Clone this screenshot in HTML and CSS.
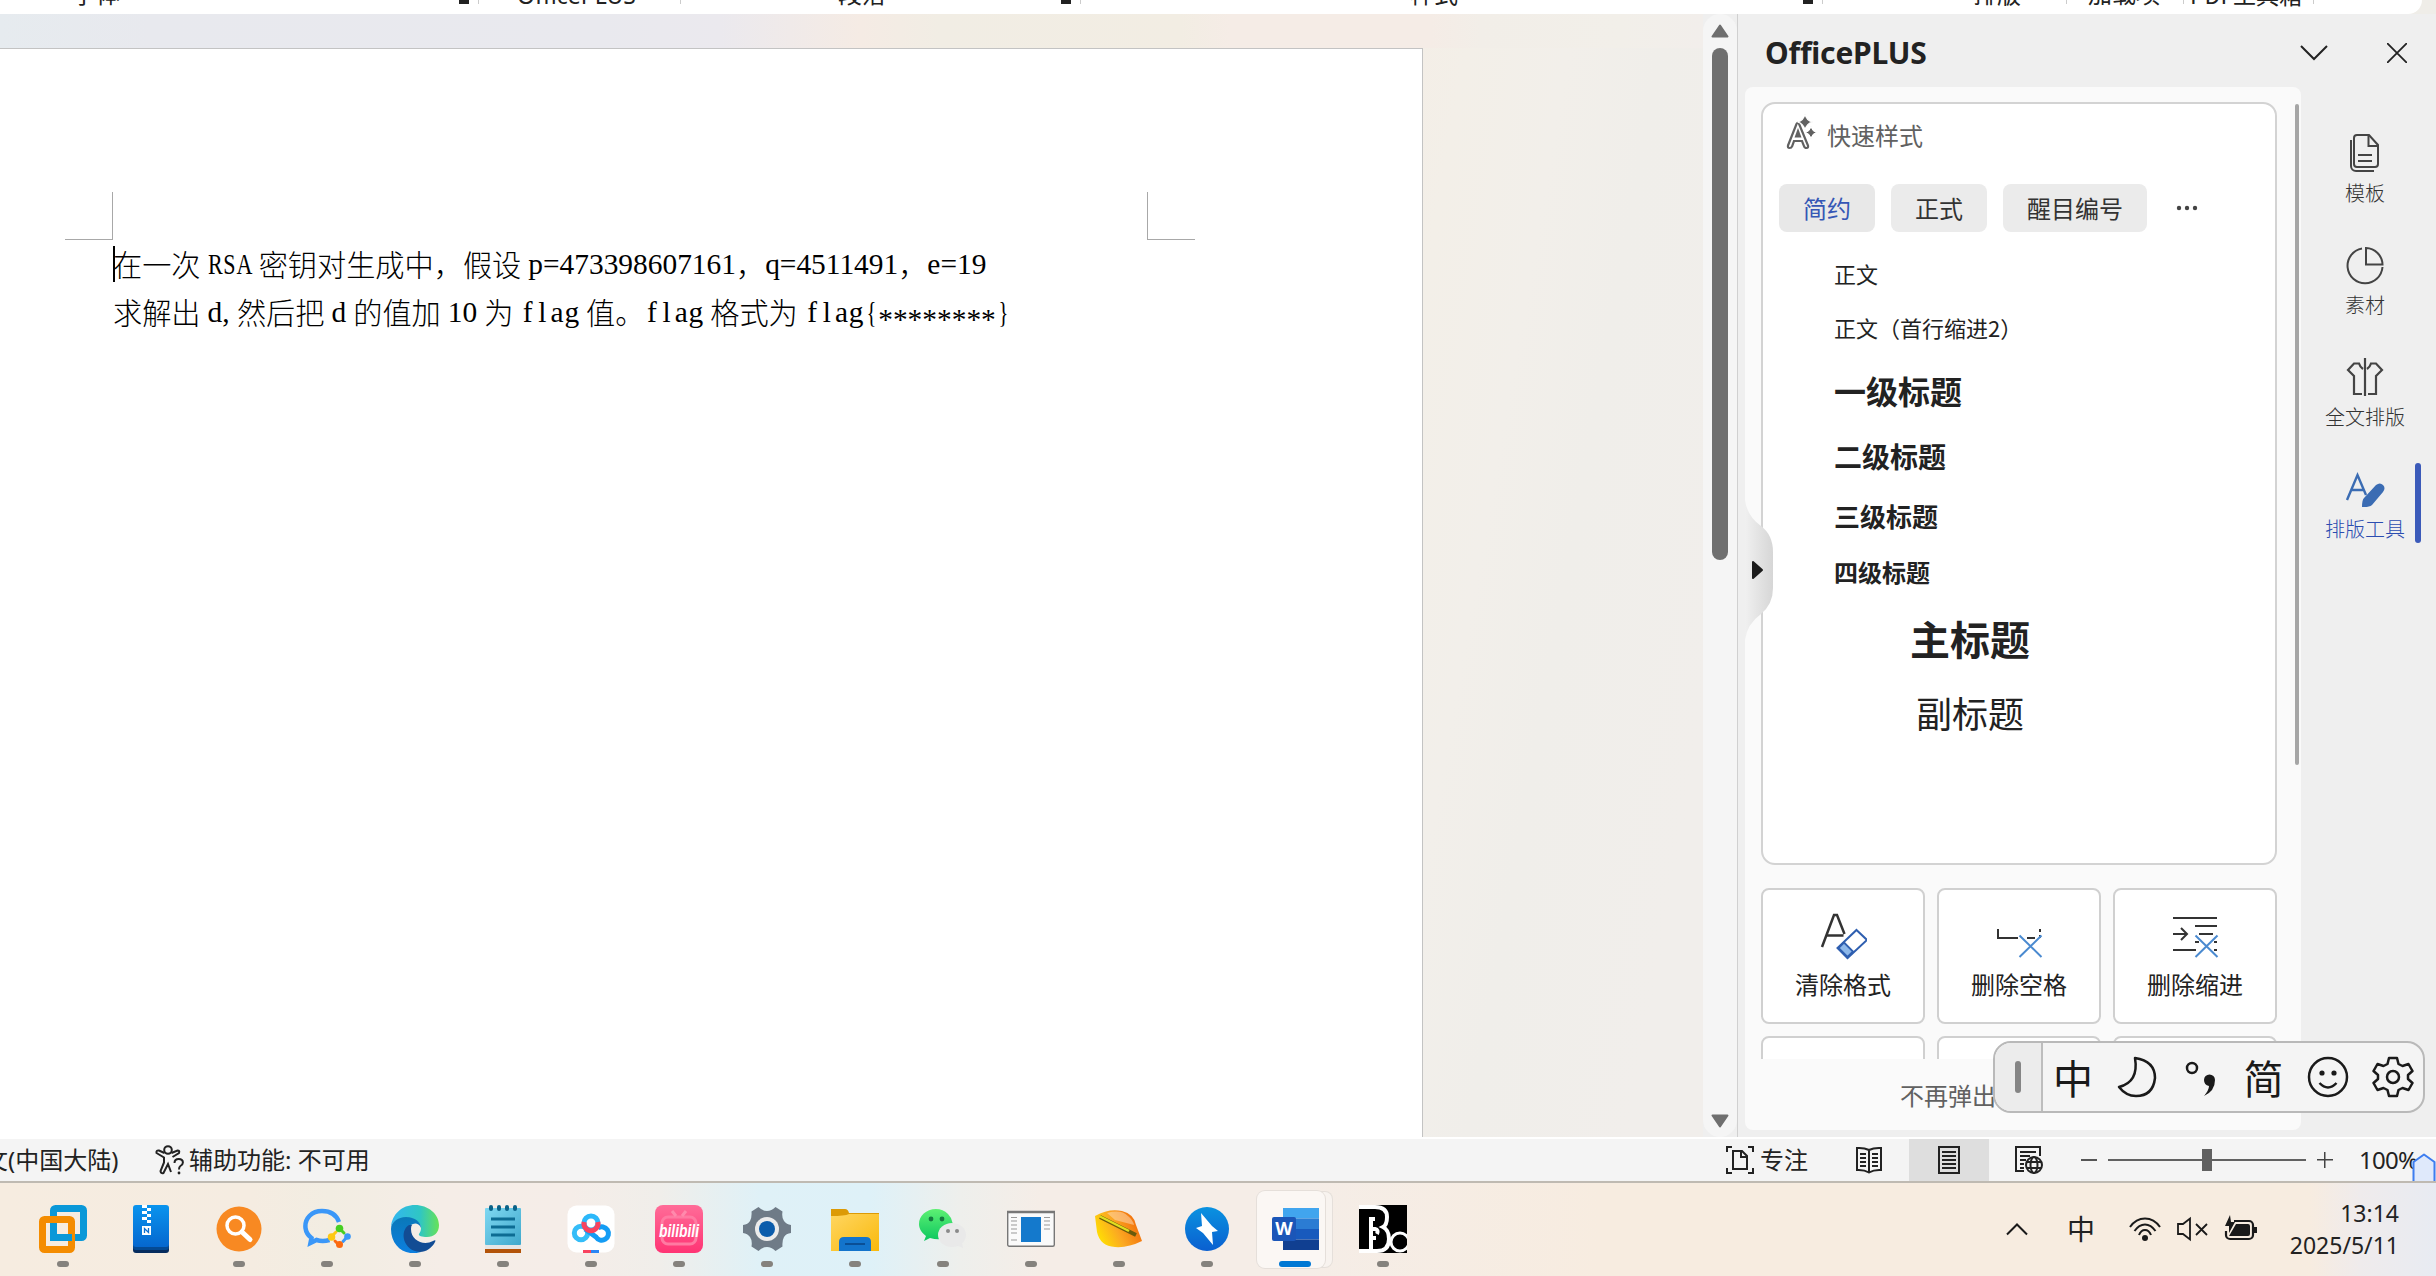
FILE: index.html
```html
<!DOCTYPE html>
<html lang="zh-CN">
<head>
<meta charset="utf-8">
<title>Word</title>
<link rel="stylesheet" href="styles.css">
</head>
<body>
<div class="screen">
<header class="ribbon">
  <div class="ribbon-inner">
    <span class="grp g-font">字体</span><i class="launch l1"></i>
    <span class="grp g-plus">OfficePLUS</span><i class="sep s2"></i>
    <span class="grp g-para">段落</span><i class="launch l2"></i>
    <span class="grp g-style">样式</span><i class="launch l3"></i>
    <span class="grp g-lay">排版</span><i class="sep s4"></i>
    <span class="grp g-add">加载项</span><i class="sep s5"></i>
    <span class="grp g-pdf">PDF工具箱</span><i class="sep s6"></i>
  </div>
</header>

<main class="main">
  <section class="canvas">
    <article class="page">
      <div class="crops"><i class="crop crop-l"></i><i class="crop crop-r"></i></div>
      <p class="line caret">在一次<span class="lat rsa gap"><b>R</b><b>S</b><b>A</b></span>密钥对生成中，假设<span class="lat gap-l">p=473398607161</span>，<span class="lat">q=4511491</span>，<span class="lat">e=19</span></p>
      <p class="line">求解出<span class="lat flag gap-l"><b>d</b><b class="comma">,</b></span>然后把<span class="lat gap">d</span>的值加<span class="lat gap">10</span>为<span class="lat flag gap"><b>f</b><b>l</b><b>a</b><b>g</b></span>值。<span class="lat flag gap-r"><b>f</b><b>l</b><b>a</b><b>g</b></span>格式为<span class="lat flag gap-l"><b>f</b><b>l</b><b>a</b><b>g</b></span><span class="lat flag brace"><b>{</b></span><span class="lat stars">********</span><span class="lat flag brace"><b>}</b></span></p>
    </article>
  </section>

  <div class="vscroll">
    <svg width="18" height="14" viewBox="0 0 18 14"><path d="M9 1.500 16.500 12.500H1.500z" fill="#6f6f6f" stroke="#6f6f6f" stroke-width="2" stroke-linejoin="round"/></svg>
    <i class="thumb"></i>
    <svg class="down" width="18" height="14" viewBox="0 0 18 14"><path d="M9 12.500 16.500 1.500H1.500z" fill="#6f6f6f" stroke="#6f6f6f" stroke-width="2" stroke-linejoin="round"/></svg>
  </div>

  <aside class="pane">
    <div class="pane-head">
      <h1>OfficePLUS</h1>
      <svg class="i-down" width="28" height="16" viewBox="0 0 28 16"><path d="M1 1 14 14 27 1" fill="none" stroke="#222" stroke-width="2"/></svg>
      <svg width="20" height="20" viewBox="0 0 20 20"><path d="M0 0 20 20M20 0 0 20" stroke="#222" stroke-width="1.800"/></svg>
    </div>
    <div class="pane-body">
      <div class="sheet">
        <div class="sheet-scroll">
          <div class="card">
            <div class="card-title">
              <svg width="32" height="36" viewBox="0 0 32 36"><path d="M3 31.500 11.500 10q1.300-2.500 2.600 0L23 31.500q.5 2.500-1.500 2.500t-2.500-2l-2-5H9l-2 5.500Q6.500 34 4.500 34T3 31.500z" fill="#fff" stroke="#616161" stroke-width="2.200"/><path d="M9.500 23.500h7L13 14z" fill="#616161"/><path d="M20 0q1.500 6.500 7.500 8-6 1.500-7.500 8-1.500-6.500-7.500-8 6-1.500 7.500-8z" fill="#616161" stroke="#fff" stroke-width="1.200"/><path d="M26 12.500q1.200 5 5.500 6-4.300 1-5.500 6-1.200-5-5.500-6 4.300-1 5.500-6z" fill="#616161" stroke="#fff"/></svg>
              <span>快速样式</span>
            </div>
            <div class="pills"><span class="pill on">简约</span><span class="pill">正式</span><span class="pill">醒目编号</span><svg width="22" height="6" viewBox="0 0 22 6"><g fill="#444"><circle cx="3" cy="3" r="2.200"/><circle cx="11" cy="3" r="2.200"/><circle cx="19" cy="3" r="2.200"/></g></svg></div>
            <ul class="styles">
              <li class="st-body">正文</li>
              <li class="st-body2">正文（首行缩进2）</li>
              <li class="st-1">一级标题</li>
              <li class="st-2">二级标题</li>
              <li class="st-3">三级标题</li>
              <li class="st-4">四级标题</li>
              <li class="st-main">主标题</li>
              <li class="st-sub">副标题</li>
            </ul>
          </div>
          <div class="tools">
            <div class="tool">
              <svg width="48" height="50" viewBox="0 0 48 50"><path d="M3 36 15 4h3l7.500 19M7.500 24.500h17" fill="none" stroke="#333" stroke-width="2.500"/><path d="M37.500 19 48 29 28.500 47 18.500 37z" fill="#fff" stroke="#2f5fb0" stroke-width="2"/><path d="M25 31.500 34 40.500 28.500 46 19.500 37z" fill="#8db8ea" stroke="#2f5fb0" stroke-width="1.800"/></svg>
              <span>清除格式</span>
            </div>
            <div class="tool">
              <svg width="48" height="50" viewBox="0 0 48 50"><path d="M3 18v9h20M32 27h8M45 18v3M45 24v3" fill="none" stroke="#333" stroke-width="2"/><path d="M24.500 24.500 46.500 46M46.500 24.500 24.500 46" stroke="#4a8ad0" stroke-width="2"/></svg>
              <span>删除空格</span>
            </div>
            <div class="tool">
              <svg width="48" height="50" viewBox="0 0 48 50"><path d="M2 7h44M24 15h22M28 23h14M24 31h4M43 31h3M2 39h23M43 39h3M2 23h14M10 17l6 6-6 6" fill="none" stroke="#333" stroke-width="2"/><path d="M24.500 24.500 46.500 46M46.500 24.500 24.500 46" stroke="#4a8ad0" stroke-width="2"/></svg>
              <span>删除缩进</span>
            </div>
            <div class="tool"></div><div class="tool"></div><div class="tool"></div>
          </div>
        </div>
        <div class="sheet-foot">不再弹出</div>
        <i class="mini-thumb"></i>
        <svg class="pull" width="29" height="140" viewBox="0 0 29 140"><defs><linearGradient id="pg"><stop offset="0" stop-color="#f0f0f0"/><stop offset="1" stop-color="#d6d6d6"/></linearGradient></defs><path d="M0 0Q2 16 16 26 28 35 28 52V88Q28 104 16 114 2 124 0 140z" fill="url(#pg)"/><path d="M8 62 17 70 8 78z" fill="#1c1c1c" stroke="#1c1c1c" stroke-width="2" stroke-linejoin="round"/></svg>
      </div>
      <nav class="tabs">
        <div class="tab"><svg width="40" height="44" viewBox="0 0 40 44"><g fill="none" stroke="#444" stroke-width="2"><path d="M12 4h12l9 10v19a3 3 0 0 1-3 3H12a3 3 0 0 1-3-3V7a3 3 0 0 1 3-3z"/><path d="M23.500 4v11H33M13 24h14M13 30h14"/><path d="M6 9v26a5 5 0 0 0 5 5h18"/></g></svg><span>模板</span></div>
        <div class="tab"><svg width="40" height="44" viewBox="0 0 40 44"><g fill="none" stroke="#444" stroke-width="2"><path d="M17 5.500A17.500 17.500 0 1 0 37.500 24"/><path d="M21 5a17 17 0 0 1 16.500 16.500H21z"/></g></svg><span>素材</span></div>
        <div class="tab"><svg width="40" height="44" viewBox="0 0 40 44"><path d="M20 3v38M18 14Q15 12 14 8.500H9L3 15l6 6v18h8M22 14q3-2 4-5.500h5l6 6.500-6 6v18h-8" fill="none" stroke="#444" stroke-width="2.200"/></svg><span>全文排版</span></div>
        <div class="tab on"><svg width="40" height="44" viewBox="0 0 40 44"><path d="M2 33 12.500 8 21 28M6 23h13" fill="none" stroke="#3b6cb3" stroke-width="2.400"/><path d="M17 40q0-7 2-9L31 18q4-3 7 0t0 7L27 38q-3 2.500-10 2z" fill="#3b6cb3"/></svg><span>排版工具</span></div>
      </nav>
    </div>
  </aside>
</main>

<footer class="status">
  <span class="lang">文(中国大陆)</span>
  <svg class="acc" width="30" height="30" viewBox="0 0 30 30"><g fill="none" stroke="#222" stroke-width="2"><circle cx="13" cy="5" r="3.800"/><path d="M9.500 8 4 5.500Q1 5 1.500 8L9 12.500v5L5.500 26q.5 3 3 2L13 19l3 8M16.500 8l6-2.500Q25 5.500 24 8l-6.500 4"/><path d="M19.500 18q0-4 4.200-4t4.200 3.500q0 2-2.500 3.500-1.400 1-1.400 3.500"/></g><circle cx="24" cy="28" r="1.400" fill="#222"/></svg>
  <span class="acc-text">辅助功能: 不可用</span>
  <span class="grow"></span>
  <svg class="foc" width="28" height="28" viewBox="0 0 28 28"><g fill="none" stroke="#222" stroke-width="2"><path d="M1 6V1h5M22 1h5v5M27 22v5h-5M6 27H1v-5"/><path d="M7 5h9l5 5v13H7zM15 5v6h6"/></g></svg>
  <span class="focus">专注</span>
  <span class="view"><svg width="28" height="28" viewBox="0 0 28 28"><g fill="none" stroke="#222" stroke-width="2"><path d="M14 4Q9 1.500 2 2v22q7-.5 12 2.500Q19 23.500 26 24V2q-7-.5-12 2zM14 4v22"/><path d="M5 8h6M5 12h6M5 16h6M5 20h6M17 8h6M17 12h6M17 16h6M17 20h6"/></g></svg></span>
  <span class="view on"><svg width="28" height="28" viewBox="0 0 28 28"><g fill="none" stroke="#222" stroke-width="2"><path d="M4 1h20v26H4z"/><path d="M7 6h14M7 10h14M7 14h14M7 18h14M7 22h14"/></g></svg></span>
  <span class="view"><svg width="28" height="28" viewBox="0 0 28 28"><g fill="none" stroke="#222" stroke-width="2"><path d="M9 25H1V1h24v9M5 6h16M5 10h10M5 14h6M5 18h4M5 22h4"/><circle cx="19" cy="19" r="8"/><ellipse cx="19" cy="19" rx="3.500" ry="8"/><path d="M12 16h14M12 22h14"/></g></svg></span>
  <span class="zoom"><i class="minus"></i><i class="track"><i class="knob"></i></i><i class="plus"></i><span>100%</span></span>
  <svg class="corner" width="24" height="28" viewBox="0 0 24 28"><path d="M1.500 30V9L12 1.500 22.500 9V30z" fill="#dfe9fb" stroke="#3d7df0" stroke-width="2" stroke-linejoin="round"/></svg>
</footer>

<div class="taskbar">
  <div class="apps">
    <div class="app"><svg viewBox="0 0 48 48"><rect x="14.500" y="3.500" width="30" height="29" rx="2" fill="none" stroke="#0a98d8" stroke-width="7"/><rect x="3.500" y="14.500" width="29" height="30" rx="2" fill="none" stroke="#f48c00" stroke-width="7"/><path d="M14.500 18v14.500H33" fill="none" stroke="#0a98d8" stroke-width="7"/></svg></div>
    <div class="app idle"><svg viewBox="0 0 48 48"><defs><linearGradient id="zg" x2="0" y2="1"><stop stop-color="#0a94ee"/><stop offset="1" stop-color="#0567cf"/></linearGradient></defs><rect x="6" y="30" width="36" height="18" rx="3" fill="#062c5e"/><rect x="6" y="30" width="36" height="15" rx="3" fill="#044a94"/><rect x="6" y="0" width="36" height="42" rx="3" fill="url(#zg)"/><path d="M15 0h5v3h-5zM20 3h4v3h-4zM15 6h5v3h-5zM20 9h4v3h-4zM15 12h5v3h-5zM20 15h4v3h-4zM15 21h9v9h-9z" fill="#fff"/><path d="M17.500 28v-4.500l4 4V23" fill="none" stroke="#0b6fd0" stroke-width="1.300"/></svg></div>
    <div class="app"><svg viewBox="0 0 48 48"><circle cx="24" cy="24" r="22.500" fill="#f88922"/><circle cx="20.500" cy="20.500" r="8.500" fill="none" stroke="#fff" stroke-width="3.500"/><path d="M27 27 35 34.500" stroke="#fff" stroke-width="5" stroke-linecap="round"/></svg></div>
    <div class="app"><svg viewBox="0 0 48 48"><path d="M36 17C33 9 26 6 19 6 9 6 1.500 13 2.500 23q.7 6 6 10l-1 5 6-3q6 2 13 0" fill="none" stroke="#3a97f8" stroke-width="4.500"/><path d="m36.500 24 8.500 8-8.500 8-8.500-8z" fill="#f5ede4"/><g stroke-width="3" stroke-linecap="round"><path d="M37 24 41 28" stroke="#46cf22"/><path d="M44 32l-4 4.500" stroke="#3a97f8"/><path d="M36 40l-4-4" stroke="#fb6a10"/><path d="M29 31l4-4" stroke="#fdc813"/></g><circle cx="36.500" cy="23.500" r="3.800" fill="#46cf22"/><circle cx="44.500" cy="31.500" r="3.300" fill="#3a97f8"/><circle cx="36.500" cy="39.500" r="3.500" fill="#fb6a10"/><circle cx="28.500" cy="32" r="3.800" fill="#fdc813"/></svg></div>
    <div class="app"><svg viewBox="0 0 48 48"><defs><linearGradient id="e1"><stop stop-color="#33b5f0"/><stop offset=".6" stop-color="#2fc6c4"/><stop offset="1" stop-color="#67e257"/></linearGradient><linearGradient id="e2" x2="0" y2="1"><stop stop-color="#0a78b8"/><stop offset="1" stop-color="#0c7fe0"/></linearGradient></defs><path d="M0 22C1 9 11 0 24 0s24 9 24 20c0 8-5 12-12 12-5 0-9-1-8-3s2-3 2-6c0-5-5-9-12-10C9 12 2 16 0 22z" fill="url(#e1)"/><path d="M0 24c0-7 7-12 15-12 9 0 15 5 15 11-2-5-6-5-8-4-8 3-7 20 8 28C14 52 0 41 0 24z" fill="url(#e2)"/><path d="M18 20c-10 6-6 26 11 27 6 0 12-4 15-10 1-2 0-2-2-1-9 5-22 0-22-12q0-3 1-4z" fill="#124c94"/></svg></div>
    <div class="app"><svg viewBox="0 0 48 48"><defs><linearGradient id="ng" x2="1" y2="1"><stop stop-color="#7fd8f2"/><stop offset="1" stop-color="#3fa8cc"/></linearGradient></defs><rect x="6" y="38" width="36" height="10" fill="#b35309"/><rect x="6" y="36" width="36" height="8" fill="#e6e6e6"/><rect x="6" y="3" width="36" height="37" rx="1" fill="url(#ng)"/><path d="M12 14h24M12 22h24M12 30h24" stroke="#0d6c93" stroke-width="3"/><path d="M12 2v2M20 2v2M28 2v2M36 2v2" stroke="#0a6288" stroke-width="4" stroke-linecap="round"/></svg></div>
    <div class="app"><svg viewBox="0 0 48 48"><rect x=".5" y=".5" width="47" height="47" rx="9" fill="#fff"/><g fill="none" stroke-width="5"><circle cx="14" cy="28" r="6.700" stroke="#35bdf8"/><path d="M31 23a6.700 6.700 0 1 1-2 9L18 24" stroke="#149cf4"/><circle cx="24" cy="18" r="7" fill="#fff" stroke="#2cb8fa"/><path d="M17.200 17a7 7 0 1 0 13.600 0" stroke="#f8435f"/></g><path d="M16 45h8v3h-8z" fill="#f8435f"/><path d="M24 45h8v3h-8z" fill="#2a86f5"/></svg></div>
    <div class="app"><svg viewBox="0 0 48 48"><defs><linearGradient id="bg" x2="0" y2="1"><stop stop-color="#ff6c98"/><stop offset="1" stop-color="#ff3474"/></linearGradient></defs><rect width="48" height="48" rx="8" fill="url(#bg)"/><rect x="7" y="12" width="34" height="27" rx="6" fill="none" stroke="#ff7aa2" stroke-width="3"/><path d="m17 6 4 5M31 6l-4 5" stroke="#ff8aac" stroke-width="3"/><text x="24" y="32" text-anchor="middle" class="bili" textLength="40" lengthAdjust="spacingAndGlyphs">bilibili</text></svg></div>
    <div class="app"><svg viewBox="0 0 48 48"><path d="M15.500 2q4 4 8.500 4t8.500-4l7 4.500q-1 6 1.500 9.500t7 4v8q-5 .5-7 4t-1.500 9.500l-7 4.500q-4-4-8.500-4t-8.500 4l-7-4.500q1-6-1.500-9.500T0 28v-8q5-.5 7-4T8.500 6.500z" fill="#6f7b87"/><circle cx="24" cy="24" r="12" fill="#ececec"/><circle cx="24" cy="24" r="8" fill="#0c5cab"/></svg></div>
    <div class="app"><svg viewBox="0 0 48 48"><defs><linearGradient id="fg" x2="1" y2="1"><stop stop-color="#ffd661"/><stop offset="1" stop-color="#f9b90c"/></linearGradient></defs><path d="M0 4h14q3 0 4 4h30v6H0z" fill="#dc9a06"/><path d="M0 11q14 0 18-2h30v37H0z" fill="url(#fg)"/><path d="M8 46V37q0-5 5-5h22q5 0 5 5v9z" fill="#1374cc"/><path d="M14 39h20" stroke="#0a4f96" stroke-width="2"/></svg></div>
    <div class="app"><svg viewBox="0 0 48 48"><defs><linearGradient id="wg" x2="0" y2="1"><stop stop-color="#5df073"/><stop offset="1" stop-color="#0cc75f"/></linearGradient></defs><path d="M17 4C7 4 0 11 0 19c0 5 3 9 7 12l-2 5 6-3q15 4 20-5 6-11-2-19-5-5-12-5z" fill="url(#wg)"/><ellipse cx="33" cy="30" rx="14" ry="12" fill="#e9e9e9"/><path d="m37 40 7 3-1-6z" fill="#e9e9e9"/><g fill="#157a3f"><circle cx="12" cy="14" r="2.400"/><circle cx="23" cy="14" r="2.400"/></g><g fill="#8a8a8a"><circle cx="29" cy="26" r="2"/><circle cx="38" cy="26" r="2"/></g></svg></div>
    <div class="app"><svg viewBox="0 0 48 48"><rect x=".7" y="6.700" width="46.600" height="34.600" rx="1.500" fill="#fafafa" stroke="#777" stroke-width="1.400"/><path d="M0 7h48" stroke="#777" stroke-width="2.500"/><rect x="14" y="12" width="20" height="25" fill="#1479cc"/><path d="M4 12.500h6M4 16h6M4 20h6M4 24h6M4 28h6M4 35h6M37 12.500h6M37 16h6M37 20h6M37 24h6" stroke="#999"/></svg></div>
    <div class="app"><svg viewBox="0 0 48 48"><defs><linearGradient id="sg" x1="0" y1=".7" x2="1" y2=".3"><stop stop-color="#ffe400"/><stop offset=".45" stop-color="#fba922"/><stop offset="1" stop-color="#f06508"/></linearGradient></defs><path d="M0 11Q14 3 27 6q12 3 14 14l6 16q-14 7-27 6Q5 41 2 27z" fill="url(#sg)"/><path d="M12 8Q26 4 33 11q5 4 6 9L20 15z" fill="#ffe0bc" opacity=".5"/><path d="m5 12 36 18" stroke="#6a5a0a" stroke-width="4"/><path d="m5 11.500 29 14.500" stroke="#dfdf20" stroke-width="2.500"/></svg></div>
    <div class="app"><svg viewBox="0 0 48 48"><defs><linearGradient id="tg" x2="0" y2="1"><stop stop-color="#0a92e0"/><stop offset="1" stop-color="#0a5fd0"/></linearGradient></defs><circle cx="24" cy="24" r="22" fill="url(#tg)"/><path d="m18 8 11 13 6 5-6 1 1 13L20 28l-7-5 6-2z" fill="#fff"/></svg></div>
    <div class="app active"><svg viewBox="0 0 48 48"><path d="M12 3h36v10.500H12z" fill="#41a5ee"/><path d="M12 13.500h36V24H12z" fill="#2b7cd3"/><path d="M12 24h36v10.500H12z" fill="#185abd"/><path d="M12 34.500h36V45H12z" fill="#103f91"/><rect x="1" y="12" width="24" height="24" rx="2" fill="#1b56b8"/><text x="13" y="30" text-anchor="middle" class="wl">W</text></svg></div>
    <div class="app"><svg viewBox="0 0 48 48"><path d="M0 0h48v48H0z" fill="#000"/><path d="M0 2h16q12 0 12 10 0 8-4 10 6 3 6 12 0 12-12 12H0M12 44V14h4M13 24h3q4 1 2 5M13 33h4" fill="none" stroke="#fff" stroke-width="4"/><circle cx="41" cy="37" r="9" fill="#000" stroke="#fff" stroke-width="3"/></svg></div>
  </div>
  <div class="tray">
    <svg class="t1" width="22" height="14" viewBox="0 0 22 14"><path d="M1 12.500 11 2.500l10 10" fill="none" stroke="#1a1a1a" stroke-width="2"/></svg>
    <span class="t2">中</span>
    <svg class="t3" width="32" height="28" viewBox="0 0 32 28"><g fill="none" stroke="#1a1a1a" stroke-width="2"><path d="M1 12Q7 3.500 16 3.500T31 12M5.500 16Q10 9.500 16 9.500T26.500 16M10 20q2-5 6-5t6 5"/></g><circle cx="16" cy="23" r="3" fill="#1a1a1a"/></svg>
    <svg class="t4" width="32" height="28" viewBox="0 0 32 28"><path d="M1 9h5l7-5.500v21L6 19H1zM19 9l11 11M30 9 19 20" fill="none" stroke="#1a1a1a" stroke-width="1.800"/></svg>
    <svg class="t5" width="34" height="28" viewBox="0 0 34 28"><path d="M10 6h15a4 4 0 0 1 4 4v10a4 4 0 0 1-4 4H6a4 4 0 0 1-4-4v-4" fill="none" stroke="#1a1a1a" stroke-width="2.200"/><path d="M12 9h12a2 2 0 0 1 2 2v8a2 2 0 0 1-2 2H5zM29 12h4v6h-4zM6 0 1 11h4v7l6-11H7z" fill="#1a1a1a"/></svg>
    <div class="clock"><span>13:14</span><span>2025/5/11</span></div>
  </div>
</div>

<div class="ime">
  <span class="grip"></span>
  <div class="keys">
    <span>中</span>
    <svg width="40" height="42" viewBox="0 0 40 42"><path d="M18 2q20 3 20 20-2 18-19 18-10 0-17-9Q22 26 18 2z" fill="none" stroke="#1a1a1a" stroke-width="2.500" stroke-linejoin="round"/></svg>
    <svg width="40" height="42" viewBox="0 0 40 42"><circle cx="12" cy="12" r="5" fill="none" stroke="#1a1a1a" stroke-width="2.500"/><path d="M24 24a5.500 5.500 0 0 1 11 0q0 11-11 16 5-6 5-10-5-1-5-6z" fill="#1a1a1a"/></svg>
    <span>简</span>
    <svg width="42" height="42" viewBox="0 0 42 42"><circle cx="21" cy="21" r="19" fill="none" stroke="#1a1a1a" stroke-width="2.500"/><circle cx="15" cy="17" r="2.600" fill="#1a1a1a"/><circle cx="27" cy="17" r="2.600" fill="#1a1a1a"/><path d="M12.500 27q8.500 9 17 0" fill="none" stroke="#1a1a1a" stroke-width="2.500"/></svg>
    <svg width="42" height="42" viewBox="0 0 42 42"><path d="M17 2h8l1.500 6 4 2 6-2 4 7-4.500 4v4l4.500 4-4 7-6-2-4 2L25 40h-8l-1.500-6-4-2-6 2-4-7L6 23v-4l-4.500-4 4-7 6 2 4-2z" fill="none" stroke="#1a1a1a" stroke-width="2.500" stroke-linejoin="round"/><circle cx="21" cy="21" r="6" fill="none" stroke="#1a1a1a" stroke-width="2.500"/></svg>
  </div>
</div>
</div>
</body>
</html>
```
FILE: styles.css
```css
* { box-sizing: border-box; }
body {
  margin: 0;
  font-family: "Noto Sans", "Noto Sans CJK SC", sans-serif;
  color: #222;
}
svg { display: block; flex: none; }
i { display: block; font-style: normal; }
.screen {
  position: relative;
  width: 2436px;
  height: 1276px;
  overflow: hidden;
  display: flex;
  flex-direction: column;
  background: #efefef;
}

/* ribbon group captions, cut off by the top edge */
.ribbon { height: 14px; flex: none; background: #efede8; overflow: hidden; }
.ribbon-inner {
  position: relative;
  width: 2422px;
  height: 14px;
  background: #fff;
  border-bottom-right-radius: 14px;
}
.grp { position: absolute; top: -21px; font: 24px/28px "Noto Sans CJK SC", sans-serif; white-space: nowrap; }
.g-font { left: 72px; }
.g-plus { left: 517px; font-family: "Noto Sans", sans-serif; font-size: 23px; top: -19px; }
.g-para { left: 838px; }
.g-style { left: 1410px; }
.g-lay { left: 1973px; }
.g-add { left: 2088px; }
.g-pdf { left: 2190px; font-size: 23px; top: -20px; }
.launch { position: absolute; top: 0; width: 20px; height: 4px; border-left: 10px solid #222; border-right: 1px solid #ccc; }
.l1 { left: 459px; } .l2 { left: 1061px; } .l3 { left: 1803px; }
.sep { position: absolute; top: 0; width: 1px; height: 4px; background: #ccc; }
.s2 { left: 680px; } .s4 { left: 2066px; } .s5 { left: 2183px; } .s6 { left: 2313px; }

.main { height: 1123px; flex: none; display: flex; }

/* document */
.canvas {
  width: 1703px;
  padding-top: 34px;
  background:
    linear-gradient(90deg, #e6ebef 0, #e8e9ee 150px, #e9e9ee 600px, #ebe9ee 720px, #f5ebe4 860px, #f1ede4 940px, #f2ede3 1180px, #f5ece6 1230px, #f5ece6 1430px, #f2eee8 1480px, #f2efe9 1620px, #f2eeeb 1703px) top/100% 34px no-repeat,
    linear-gradient(100deg, #f5ece5 0, #f5ede5 1330px, #f3efe8 1450px, #f2efea 1550px, #f0eeea 1640px, #f1eeeb 1800px);
}
.page {
  width: 1423px;
  height: 1089px;
  background: #fff;
  border: solid #c3c3c3;
  border-width: 1px 1px 0 0;
  padding: 143px 0 0 65px;
}
.crops { display: flex; justify-content: space-between; width: 1130px; height: 48px; }
.crop { width: 48px; height: 48px; border: 0 solid #a8a8a8; border-bottom-width: 1px; }
.crop-l { border-right-width: 1px; }
.crop-r { border-left-width: 1px; }
.line {
  position: relative;
  display: flex;
  margin: 0 0 0 48px;
  height: 48px;
  font: 300 29.200px/45px "Noto Sans CJK SC", sans-serif;
  color: #000;
  white-space: nowrap;
}
.line.caret { margin-top: 1px; }
.line.caret::before { content: ""; position: absolute; left: 0; top: 5px; width: 2px; height: 36px; background: #000; }
.lat { font-family: "Liberation Serif", serif; font-size: 29.400px; line-height: 46px; }
.gap { margin: 0 7px; }
.gap-l { margin-left: 7px; }
.gap-r { margin-right: 7px; }
.rsa, .flag { display: inline-flex; }
.lat b { display: block; width: 14.700px; font-weight: 400; text-align: center; }
.lat b.comma { text-align: left; }
.rsa b { transform: scaleX(.75); display: flex; justify-content: center; }
.brace b { transform: scaleX(.7); }
.stars { padding-top: 7px; height: 48px; }

.vscroll {
  width: 34px;
  background: #f5f5f5;
  border-radius: 17px;
  padding: 10px 0 9px;
  display: flex;
  flex-direction: column;
  align-items: center;
}
.thumb { width: 16px; height: 512px; margin-top: 10px; border-radius: 8px; background: #6f6f6f; }
.down { margin-top: auto; }

/* task pane */
.pane { flex: 1; border-left: 1px solid #d0d0d0; display: flex; flex-direction: column; }
.pane-head { height: 73px; padding: 0 29px 0 27px; display: flex; align-items: center; }
.pane-head h1 { margin: 5px auto 0 0; font-size: 30px; font-weight: 700; line-height: 40px; letter-spacing: -.2px; }
.pane-head svg { margin-top: 5px; }
.i-down { margin-right: 59px; }
.pane-body { display: flex; padding-left: 7px; }
.sheet {
  position: relative;
  width: 556px;
  height: 1043px;
  border-radius: 8px;
  background: #fafafa;
  padding: 15px 24px 0 16px;
}
.sheet-scroll { height: 957px; overflow: hidden; }
.card { height: 763px; background: #fff; border: 2px solid #d3d3d3; border-radius: 14px; padding: 10px 15px 0 16px; }
.card-title { display: flex; align-items: center; height: 40px; gap: 10px; padding-left: 6px; font-size: 24px; color: #616161; }
.card-title svg { margin-top: -4px; }
.pills { display: flex; align-items: center; height: 48px; margin-top: 30px; gap: 16px; }
.pill { height: 48px; padding: 0 24px; border-radius: 8px; background: #ebebeb; font: 24px/48px "Noto Sans CJK SC", sans-serif; color: #333; }
.pill.on { color: #3556b5; background: #e8e8e8; }
.pills svg { margin-left: 13px; }
.styles { list-style: none; margin: 14px 0 0; padding: 0 0 0 55px; font-family: "Noto Sans CJK SC", sans-serif; }
.styles li { display: flex; align-items: center; }
.st-body, .st-body2 { height: 54px; font-size: 22px; }
.st-1 { height: 72px; font-size: 32px; font-weight: 700; }
.st-2 { height: 59px; font-size: 28px; font-weight: 700; }
.st-3 { height: 60px; font-size: 26px; font-weight: 700; }
.st-4 { height: 52px; font-size: 24px; font-weight: 700; }
.st-main { height: 81px; padding-left: 76px; font-size: 40px; font-weight: 700; }
.st-sub { height: 68px; padding-left: 82px; font-size: 36px; }
.tools { display: grid; grid-template-columns: repeat(3, 164px); gap: 12px; margin-top: 23px; }
.tool {
  height: 136px;
  background: #fff;
  border: 2px solid #d0d0d0;
  border-radius: 8px;
  display: flex;
  flex-direction: column;
  align-items: center;
  padding-top: 21px;
  font: 24px/36px "Noto Sans CJK SC", sans-serif;
}
.tool span { margin-top: 5px; }
.sheet-foot { padding: 19px 0 0 139px; font: 24px/34px "Noto Sans CJK SC", sans-serif; color: #616161; }
.mini-thumb { position: absolute; right: 2px; top: 17px; width: 4px; height: 661px; border-radius: 2px; background: #a6a6a6; }
.pull { position: absolute; left: 0; top: 413px; }
.tabs { flex: 1; padding-top: 44px; }
.tab {
  position: relative;
  height: 112px;
  margin-right: 7px;
  display: flex;
  flex-direction: column;
  align-items: center;
  font: 300 20px/30px "Noto Sans CJK SC", sans-serif;
  color: #333;
}
.tab span { margin-top: 3px; }
.tab.on { color: #2b4cb0; }
.tab.on::after { content: ""; position: absolute; right: 8px; top: -4px; width: 6px; height: 80px; border-radius: 3px; background: #3b5ab9; }

/* status bar */
.status {
  position: relative;
  height: 46px;
  flex: none;
  display: flex;
  align-items: center;
  border-top: 2px solid #fff;
  border-bottom: 2px solid #bfbab2;
  background: #f4f4f4;
  font: 24px/40px "Noto Sans", "Noto Sans CJK SC", sans-serif;
  white-space: nowrap;
}
.lang { margin-left: -16px; width: 134px; }
.acc { margin: 0 4px 0 37px; }
.grow { flex: 1; }
.focus { width: 48px; margin: 0 21px 0 6px; }
.view { width: 80px; height: 42px; display: flex; align-items: center; justify-content: center; }
.view.on { background: #dedede; }
.zoom { display: flex; align-items: center; width: 367px; padding-left: 12px; }
.zoom > span { margin-left: 26px; font-size: 24px; letter-spacing: -.7px; }
.minus { width: 16px; height: 2px; background: #555; }
.track { width: 198px; height: 2px; margin: 0 11px 0 11px; background: #616161; }
.knob { width: 10px; height: 22px; margin: -10px auto 0; background: #616161; }
.plus { width: 16px; height: 16px; background: linear-gradient(#444, #444) center/16px 1.500px no-repeat, linear-gradient(#444, #444) center/1.500px 16px no-repeat; }
.corner { position: absolute; right: 0; bottom: 0; }

/* taskbar */
.taskbar {
  flex: 1;
  display: flex;
  justify-content: space-between;
  background: linear-gradient(90deg, #f6ece0 0, #f5ece1 250px, #f2ede2 330px, #f5ede7 440px, #f5ede8 570px, #f0eeea 660px, #dff1f7 760px, #def1f8 870px, #eeefec 960px, #f5ede7 1040px, #f5ede7 1300px, #f7ece0 1600px, #f7ece0 2310px, #efebec 2360px, #e8ebf2 2436px);
}
.apps { display: flex; padding-left: 19px; }
.app { position: relative; width: 88px; display: flex; flex-direction: column; align-items: center; padding-top: 22px; }
.app svg { position: relative; width: 48px; height: 48px; }
.app::after { content: ""; position: relative; width: 12px; height: 6px; margin-top: 8px; border-radius: 3px; background: #85827d; }
.app.idle::after { visibility: hidden; }
.app.active::after { width: 32px; background: #0078d4; }
.app.active::before { content: ""; position: absolute; left: 6px; top: 8px; width: 68px; height: 77px; border-radius: 8px; background: #fbf7f4; box-shadow: 0 0 0 1px #e5dfda, 8px 0 0 -1px #f8f3ef, 8px 0 0 0 #e5dfda; }
.bili { font: italic 700 19px "Liberation Sans", sans-serif; fill: #fff; }
.wl { font: 700 18px "Noto Sans", sans-serif; fill: #fff; }
.tray { display: flex; align-items: center; height: 91px; padding-right: 37px; }
.t2 { width: 28px; margin: -2px 34px 0 39px; font: 28px/40px "Noto Sans CJK SC", sans-serif; }
.t4 { margin: 0 15px 0 16px; }
.clock { width: 141px; display: flex; flex-direction: column; align-items: flex-end; font-size: 23px; line-height: 32px; }

/* floating input-method bar */
.ime {
  position: absolute;
  left: 1993px;
  top: 1041px;
  width: 432px;
  height: 72px;
  border: 2px solid #b9b9b9;
  border-radius: 18px;
  background: #f4f4f4;
  display: flex;
  overflow: hidden;
}
.grip { width: 48px; border-right: 2px solid #bdbdbd; background: #ececec; display: flex; align-items: center; justify-content: center; }
.grip::before { content: ""; width: 6px; height: 32px; border-radius: 3px; background: #858585; }
.keys { flex: 1; display: flex; align-items: center; justify-content: space-between; padding: 0 9px 0 9px; }
.keys span { width: 42px; text-align: center; font: 40px/64px "Noto Sans CJK SC", sans-serif; color: #1a1a1a; }
```
